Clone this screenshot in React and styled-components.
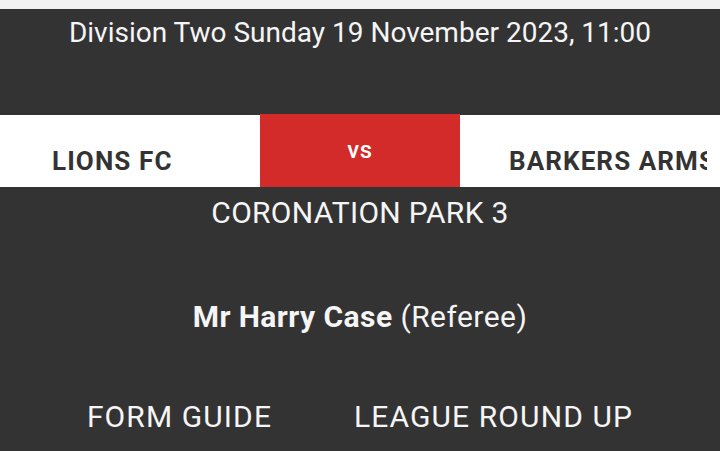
import React from "react";
import styled, { createGlobalStyle } from "styled-components";

const Global = createGlobalStyle`
  html, body { margin: 0; padding: 0; background: #333333; }
  body { font-family: Roboto, "Noto Sans", sans-serif; color: #ffffff; }
`;

const Page = styled.div`
  width: 720px;
  height: 451px;
  overflow: hidden;
  background: #333333;
  border-top: 9px solid #f2f2f2;
  box-sizing: border-box;
  display: flex;
  flex-direction: column;
`;

const Header = styled.div`
  height: 106px;
  box-sizing: border-box;
  padding-top: 7px;
  text-align: center;
  font-size: 28px;
  line-height: 33.6px;
  color: #f5f5f5;
`;

const Band = styled.div`
  display: grid;
  grid-template-columns: 260px 200px 260px;
  height: 72px;
`;

const Team = styled.div`
  background: #ffffff;
  color: #333333;
  font-weight: 700;
  font-size: 26px;
  line-height: 30px;
  letter-spacing: 1.1px;
  padding: 31px 13px 0 ${(p) => p.$indent}px;
  min-width: 0;
`;

const TeamName = styled.span`
  display: block;
  white-space: nowrap;
  overflow: hidden;
`;

const Versus = styled.div`
  background: #d32a2a;
  color: #ffffff;
  font-weight: 500;
  font-size: 24px;
  line-height: 28px;
  letter-spacing: 0.5px;
  text-align: center;
  padding-top: 22px;
  margin-top: -1px;
`;

const Line = styled.div`
  text-align: center;
  font-size: 30px;
  line-height: 36px;
  letter-spacing: ${(p) => p.$spacing}px;
  margin-top: ${(p) => p.$top}px;
  color: #f5f5f5;
`;

const Name = styled.b`
  font-weight: 700;
`;

const Links = styled.nav`
  display: flex;
  justify-content: center;
  gap: 82px;
  margin-top: ${(p) => p.$top}px;
`;

const LinkItem = styled.a`
  color: #f5f5f5;
  text-decoration: none;
  font-size: 30px;
  line-height: 36px;
  letter-spacing: 1.1px;
`;

export default function App() {
  return (
    <>
      <Global />
      <Page>
        <Header>Division Two Sunday 19 November 2023, 11:00</Header>
        <Band>
          <Team $indent={52}>
            <TeamName>LIONS FC</TeamName>
          </Team>
          <Versus>vs</Versus>
          <Team $indent={49}>
            <TeamName>BARKERS ARMS FC</TeamName>
          </Team>
        </Band>
        <Line $spacing={0.3} $top={8}>CORONATION PARK 3</Line>
        <Line $spacing={0.45} $top={68}>
          <Name>Mr Harry Case</Name> (Referee)
        </Line>
        <Links $top={64}>
          <LinkItem href="#">FORM GUIDE</LinkItem>
          <LinkItem href="#">LEAGUE ROUND UP</LinkItem>
        </Links>
      </Page>
    </>
  );
}
